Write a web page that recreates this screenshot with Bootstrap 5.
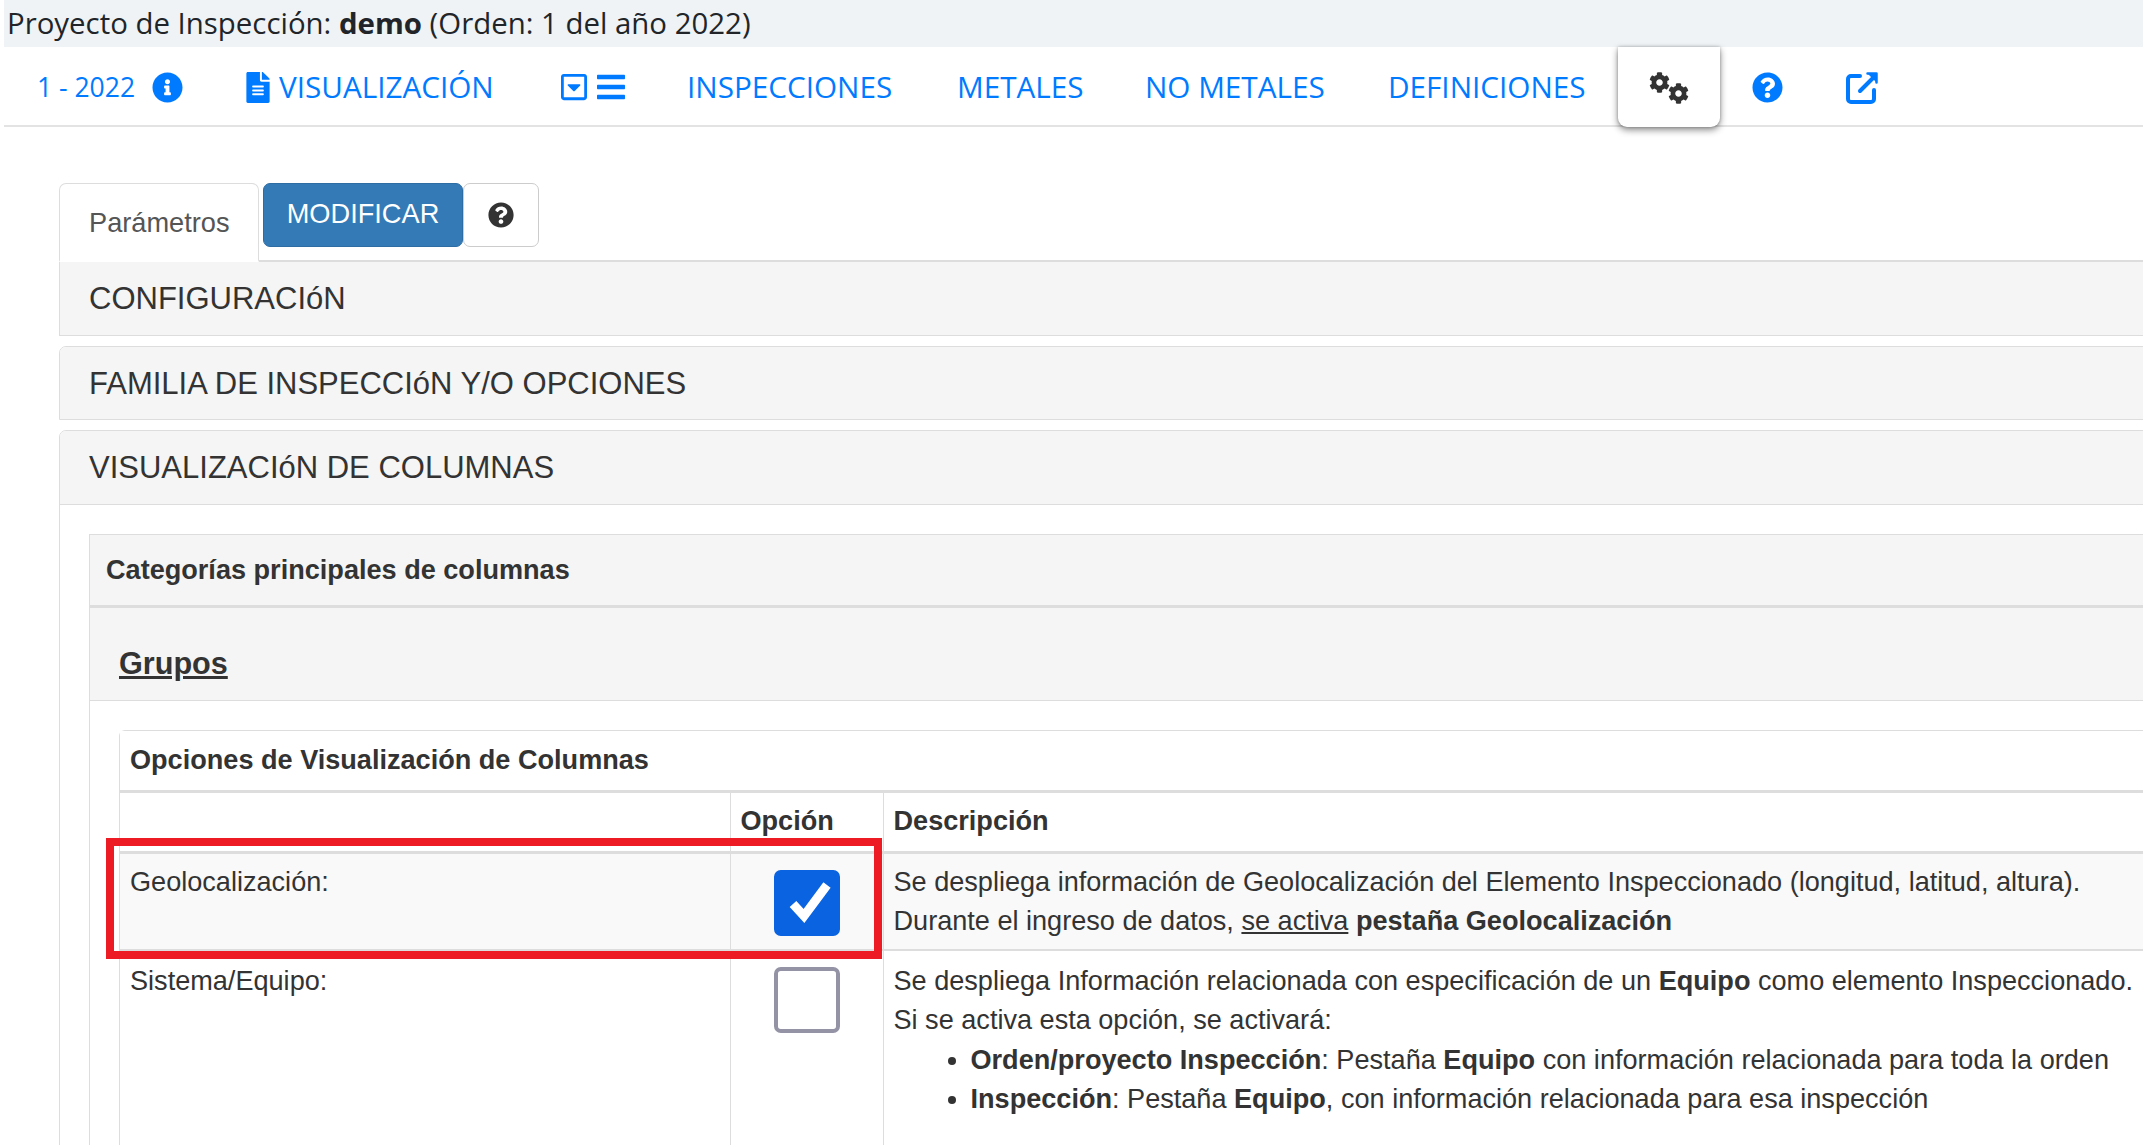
<!DOCTYPE html>
<html lang="es">
<head>
<meta charset="utf-8">
<title>Parámetros</title>
<link href="https://cdn.jsdelivr.net/npm/bootstrap@5.3.0/dist/css/bootstrap.min.css" rel="stylesheet">
<style>
html,body{overflow:hidden;height:1145px}
body{background:#fff;color:#333;font-family:"Liberation Sans",Arial,sans-serif;font-size:27.1px;line-height:39.3px;width:2143px}
.topline{margin-left:4px;height:47px;background:#eff3f6;font-family:"Open Sans","Noto Sans",sans-serif;font-size:29.4px;line-height:47px;color:#212529;padding-left:3px;white-space:nowrap}
.mainbar{margin-left:4px;height:80px;border-bottom:2px solid #e3e3e3;padding:0;align-items:flex-start;flex-wrap:nowrap}
.mainbar .nav-link{font-family:"Open Sans","Noto Sans",sans-serif;font-size:29.7px;line-height:40px;color:#007bff;padding:0;white-space:nowrap;display:flex;align-items:center;height:80px}
.mainbar .yearlink{font-size:26.5px;margin-left:33px;width:209px}
.mainbar .yearlink svg{margin-left:17px}
.mainbar .vislink{width:315px}
.mainbar .vislink svg{margin-right:9px}
.mainbar .trilink{width:126px}
.mainbar .trilink svg+svg{margin-left:10px}
.mainbar .lnk-ins{width:270px}
.mainbar .lnk-met{width:188px}
.mainbar .lnk-nom{width:243px}
.mainbar .lnk-def{width:230px}
.gearbtn{width:102px;height:80px;background:#fff;border-radius:0 0 9px 9px;box-shadow:0 3px 7px rgba(0,0,0,.45),0 0 3px rgba(0,0,0,.25);position:relative;z-index:2}
.gearbtn svg{position:absolute}
.gear-a{left:31px;top:25px}
.gear-b{left:50px;top:36px}
.mainbar .helplink{margin-left:32px;width:94px}
.content{margin-left:59px;width:2300px;padding-top:56px}
.tabsline{border-bottom:2px solid #ddd;height:79px;align-items:flex-start;flex-wrap:nowrap}
.tabsline .nav-link{width:200px;height:79px;border:1px solid #ddd;border-bottom:2px solid #fff;border-radius:7px 7px 0 0;background:#fff;color:#555;font-size:27.2px;line-height:77px;padding:0 0 0 29px;margin-bottom:-2px;margin-right:4px}
.modbtn{width:200px;height:64px;background:#337ab7;border:1px solid #2e6da4;color:#fff;font-size:27.2px;line-height:44px;padding:8px 0;border-radius:7px}
.modbtn:hover{background:#337ab7;color:#fff}
.askbtn{width:76px;height:64px;background:#fff;border:1px solid #ccc;border-radius:7px;padding:0;display:flex;align-items:center;justify-content:center}
.secbox{border:1px solid #ddd;border-radius:7px 7px 0 0;margin-bottom:10px;--bs-card-bg:#fff;background:#fff}
.secbox>.card-header{background:#f5f5f5;border:0;border-radius:6px 6px 0 0;height:72px;padding:0 0 0 29px;font-size:31px;line-height:74px;color:#333}
.secbox.first{border-top:0;border-radius:0;margin-bottom:10px}
.secbox.first>.card-header{border-radius:0;height:73px}
.secbox.open>.card-header{border-bottom:1px solid #ddd;height:74px}
.secbox.open>.card-body{padding:29px 0 0 29px}
.subbox{border:1px solid #ddd;border-radius:0;background:#fff}
.subbox>.card-header{background:#f5f5f5;border:0;border-bottom:3px solid #ddd;border-radius:0;height:73px;padding:0 0 0 16px;font-size:27.1px;font-weight:700;line-height:69px}
.grouphead{background:#f5f5f5;border-bottom:1px solid #ddd;height:93px;padding-left:29px;font-size:30.6px;font-weight:700;line-height:110px;text-decoration:underline}
.groupbody{padding:29px 0 0 29px}
.optbox{border:1px solid #ddd;border-bottom:0;background:#fff}
.optbox>.card-header{background:#fff;border:0;border-bottom:3px solid #ddd;border-radius:0;height:62px;padding:0 0 0 10px;font-size:27.1px;font-weight:700;line-height:58px}
.tablewrap{position:relative}
.opttable{table-layout:fixed;width:100%;margin:0;color:#333;--bs-table-color:#333;--bs-table-bg:transparent;font-size:27.1px;line-height:39.3px;border-collapse:collapse}
.opttable th,.opttable td{padding:10px;border-top:0;border-bottom:1px solid #ddd;border-left:1px solid #ddd;vertical-align:top;box-shadow:none}
.opttable tr>*:first-child{border-left:0;width:610px}
.opttable th{border-bottom:3px solid #ddd;height:59px;padding:8px 10px 0;line-height:40px}
.opttable .cw2{width:153px}
.opttable .geo-row td{background:#f9f9f9;height:97px;padding:8px 10px 9px;border-bottom:2px solid #ddd}
.opttable .eq-row td{height:330px}
.opttable .geo-row .mid,.opttable .eq-row .mid{text-align:center;padding:16px 0 0}
.tick{width:66px;height:66px;margin:0;border-radius:5px;border:4px solid #9393a5;background-color:#fff;box-shadow:none;float:none;display:inline-block;vertical-align:top}
.tick:checked{background-color:#0a63e0;border-color:#0a63e0;background-size:100% 100%;background-image:url("data:image/svg+xml,%3Csvg xmlns='http://www.w3.org/2000/svg' viewBox='0 0 58 58'%3E%3Cpath fill='none' stroke='%23fff' stroke-width='9' stroke-linejoin='miter' d='M15 30l11 12L49 11'/%3E%3C/svg%3E")}
.opttable ul{margin:0;padding-left:77px}
.opttable p{margin:0}
.redframe{position:absolute;left:-14px;top:45px;width:776px;height:121px;border:8px solid #ed1c24;pointer-events:none}
</style>
</head>
<body>
<svg width="0" height="0" class="d-block position-absolute">
<defs>
<path id="cogshape" d="M487.4 315.7l-42.6-24.6c4.3-23.2 4.3-47 0-70.2l42.6-24.6c4.9-2.8 7.1-8.6 5.5-14-11.1-35.6-30-67.8-54.7-94.6-3.8-4.1-10-5.1-14.8-2.3L380.8 110c-17.9-15.4-38.5-27.3-60.8-35.1V25.8c0-5.6-3.9-10.5-9.4-11.7-36.7-8.2-74.3-7.8-109.2 0-5.5 1.2-9.4 6.1-9.4 11.7V75c-22.2 7.9-42.8 19.8-60.8 35.1L88.7 85.5c-4.9-2.8-11-1.9-14.8 2.3-24.7 26.7-43.6 58.9-54.7 94.6-1.7 5.4.6 11.2 5.5 14L67.3 221c-4.3 23.2-4.3 47 0 70.2l-42.6 24.6c-4.9 2.8-7.1 8.6-5.5 14 11.1 35.6 30 67.8 54.7 94.6 3.8 4.1 10 5.1 14.8 2.3l42.6-24.6c17.9 15.4 38.5 27.3 60.8 35.1v49.2c0 5.6 3.9 10.5 9.4 11.7 36.7 8.2 74.3 7.8 109.2 0 5.5-1.2 9.4-6.1 9.4-11.7v-49.2c22.2-7.9 42.8-19.8 60.8-35.1l42.6 24.6c4.9 2.8 11 1.9 14.8-2.3 24.7-26.7 43.6-58.9 54.7-94.6 1.5-5.5-.7-11.3-5.6-14.1zM256 336c-44.1 0-80-35.9-80-80s35.9-80 80-80 80 35.9 80 80-35.9 80-80 80z"/>
<path id="askshape" d="M504 256c0 136.997-111.043 248-248 248S8 392.997 8 256C8 119.083 119.043 8 256 8s248 111.083 248 248zM262.655 90c-54.497 0-89.255 22.957-116.549 63.758-3.536 5.286-2.353 12.415 2.715 16.258l34.699 26.31c5.205 3.947 12.621 3.008 16.665-2.122 17.864-22.658 30.113-35.797 57.303-35.797 20.429 0 45.698 13.148 45.698 32.958 0 14.976-12.363 22.667-32.534 33.976C247.128 238.528 216 254.941 216 296v4c0 6.627 5.373 12 12 12h56c6.627 0 12-5.373 12-12v-1.333c0-28.462 83.186-29.647 83.186-106.667 0-58.002-60.165-102-116.531-102zM256 338c-25.365 0-46 20.635-46 46 0 25.364 20.635 46 46 46s46-20.636 46-46c0-25.365-20.635-46-46-46z"/>
</defs>
</svg>

<div class="topline">Proyecto de Inspección: <b>demo</b> (Orden: 1 del año 2022)</div>

<nav class="nav mainbar d-flex">
  <a class="nav-link yearlink" href="#">1 - 2022
    <svg width="31" height="31" viewBox="0 0 512 512" fill="#007bff"><path d="M256 8C119.043 8 8 119.083 8 256c0 136.997 111.043 248 248 248s248-111.003 248-248C504 119.083 392.957 8 256 8zm0 110c23.196 0 42 18.804 42 42s-18.804 42-42 42-42-18.804-42-42 18.804-42 42-42zm56 254c0 6.627-5.373 12-12 12h-88c-6.627 0-12-5.373-12-12v-24c0-6.627 5.373-12 12-12h12v-64h-12c-6.627 0-12-5.373-12-12v-24c0-6.627 5.373-12 12-12h64c6.627 0 12 5.373 12 12v100h12c6.627 0 12 5.373 12 12v24z"/></svg></a>
  <a class="nav-link vislink" href="#">
    <svg width="24" height="31" viewBox="0 0 384 512" fill="#007bff"><path d="M224 136V0H24C10.7 0 0 10.7 0 24v464c0 13.3 10.7 24 24 24h336c13.3 0 24-10.7 24-24V160H248c-13.2 0-24-10.8-24-24zm64 236c0 6.6-5.4 12-12 12H108c-6.6 0-12-5.4-12-12v-8c0-6.6 5.4-12 12-12h168c6.6 0 12 5.4 12 12v8zm0-64c0 6.6-5.4 12-12 12H108c-6.6 0-12-5.4-12-12v-8c0-6.6 5.4-12 12-12h168c6.6 0 12 5.4 12 12v8zm0-72v8c0 6.6-5.4 12-12 12H108c-6.6 0-12-5.4-12-12v-8c0-6.6 5.4-12 12-12h168c6.6 0 12 5.4 12 12zm96-114.1v6.1H256V0h6.1c6.4 0 12.5 2.5 17 7l97.9 98c4.5 4.5 7 10.6 7 16.9z"/></svg>VISUALIZACIÓN</a>
  <a class="nav-link trilink" href="#" aria-label="Menú">
    <svg width="26" height="30" viewBox="0 0 448 512" fill="#007bff" preserveAspectRatio="none"><path d="M125.1 208h197.8c10.7 0 16.1 13 8.5 20.5l-98.9 98.3c-4.7 4.7-12.2 4.7-16.9 0l-98.9-98.3c-7.7-7.5-2.3-20.5 8.4-20.5zM448 80v352c0 26.5-21.5 48-48 48H48c-26.5 0-48-21.5-48-48V80c0-26.5 21.5-48 48-48h352c26.5 0 48 21.5 48 48zm-48 346V86c0-3.3-2.7-6-6-6H54c-3.3 0-6 2.7-6 6v340c0 3.3 2.7 6 6 6h340c3.3 0 6-2.7 6-6z"/></svg><svg width="28" height="32" viewBox="0 0 448 512" fill="#007bff"><path d="M16 132h416c8.837 0 16-7.163 16-16V76c0-8.837-7.163-16-16-16H16C7.163 60 0 67.163 0 76v40c0 8.837 7.163 16 16 16zm0 160h416c8.837 0 16-7.163 16-16v-40c0-8.837-7.163-16-16-16H16c-8.837 0-16 7.163-16 16v40c0 8.837 7.163 16 16 16zm0 160h416c8.837 0 16-7.163 16-16v-40c0-8.837-7.163-16-16-16H16c-8.837 0-16 7.163-16 16v40c0 8.837 7.163 16 16 16z"/></svg></a>
  <a class="nav-link lnk-ins" href="#">INSPECCIONES</a>
  <a class="nav-link lnk-met" href="#">METALES</a>
  <a class="nav-link lnk-nom" href="#">NO METALES</a>
  <a class="nav-link lnk-def" href="#">DEFINICIONES</a>
  <div class="gearbtn" role="button" aria-label="Parámetros">
    <svg class="gear-a" width="21" height="21" viewBox="0 0 512 512" fill="#333"><use href="#cogshape"/></svg>
    <svg class="gear-b" width="21" height="21" viewBox="0 0 512 512" fill="#333"><use href="#cogshape"/></svg>
  </div>
  <a class="nav-link helplink" href="#" aria-label="Ayuda"><svg width="31" height="31" viewBox="0 0 512 512" fill="#007bff"><use href="#askshape"/></svg></a>
  <a class="nav-link" href="#" aria-label="Abrir"><svg width="33" height="33" viewBox="0 0 33 33" fill="none" stroke="#007bff" stroke-width="4" stroke-linecap="round" stroke-linejoin="round"><path d="M14 5H5a3 3 0 0 0-3 3v20a3 3 0 0 0 3 3h20a3 3 0 0 0 3-3v-9"/><path d="M14 20 28 6"/><path d="M21.500 2.500H30.500V11.500" fill="#007bff" stroke-width="2.500"/></svg></a>
</nav>

<main class="content">
  <div class="nav tabsline d-flex">
    <a class="nav-link" href="#">Parámetros</a>
    <a class="btn modbtn" href="#">MODIFICAR</a>
    <a class="btn askbtn" href="#" aria-label="Ayuda"><svg width="26" height="26" viewBox="0 0 512 512" fill="#333"><use href="#askshape"/></svg></a>
  </div>

  <section class="card secbox first"><div class="card-header">CONFIGURACIóN</div></section>
  <section class="card secbox"><div class="card-header">FAMILIA DE INSPECCIóN Y/O OPCIONES</div></section>
  <section class="card secbox open">
    <div class="card-header">VISUALIZACIóN DE COLUMNAS</div>
    <div class="card-body">
      <div class="card subbox">
        <div class="card-header">Categorías principales de columnas</div>
        <div class="grouphead">Grupos</div>
        <div class="groupbody">
          <div class="card optbox">
            <div class="card-header">Opciones de Visualización de Columnas</div>
            <div class="tablewrap">
              <table class="table opttable">
                <thead>
                  <tr><th></th><th class="cw2">Opción</th><th>Descripción</th></tr>
                </thead>
                <tbody>
                  <tr class="geo-row">
                    <td>Geolocalización:</td>
                    <td class="mid"><input class="form-check-input tick" type="checkbox" checked aria-label="Geolocalización"></td>
                    <td>Se despliega información de Geolocalización del Elemento Inspeccionado (longitud, latitud, altura).<br>Durante el ingreso de datos, <u>se activa</u> <b>pestaña Geolocalización</b></td>
                  </tr>
                  <tr class="eq-row">
                    <td>Sistema/Equipo:</td>
                    <td class="mid"><input class="form-check-input tick" type="checkbox" aria-label="Sistema/Equipo"></td>
                    <td>
                      <p>Se despliega Información relacionada con especificación de un <b>Equipo</b> como elemento Inspeccionado.</p>
                      <p>Si se activa esta opción, se activará:</p>
                      <ul>
                        <li><b>Orden/proyecto Inspección</b>: Pestaña <b>Equipo</b> con información relacionada para toda la orden</li>
                        <li><b>Inspección</b>: Pestaña <b>Equipo</b>, con información relacionada para esa inspección</li>
                      </ul>
                    </td>
                  </tr>
                </tbody>
              </table>
              <div class="redframe"></div>
            </div>
          </div>
        </div>
      </div>
    </div>
  </section>
</main>
<script src="https://cdn.jsdelivr.net/npm/bootstrap@5.3.0/dist/js/bootstrap.bundle.min.js"></script>
</body>
</html>
